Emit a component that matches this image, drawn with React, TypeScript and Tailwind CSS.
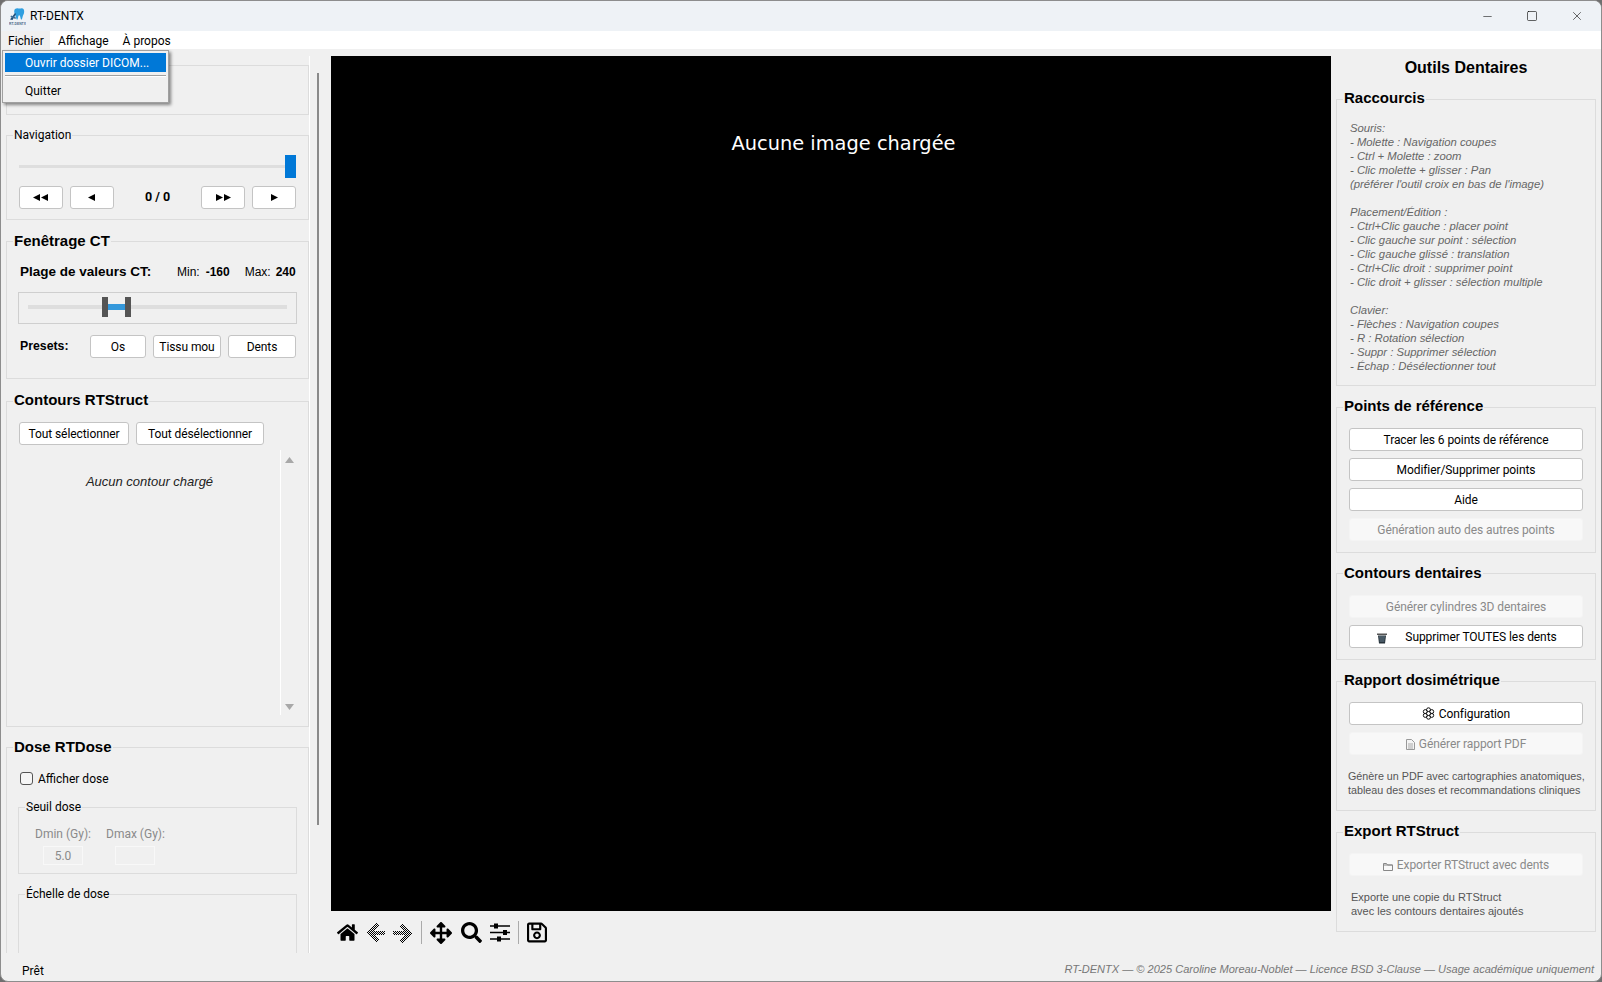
import { ReactNode } from "react";
import { FaHome, FaArrowsAlt, FaSearch, FaRegSave } from "react-icons/fa";
import { Minus, Square, X } from "lucide-react";

const ui = "font-['Roboto',sans-serif]";
const arial = "font-['Liberation_Sans',Arial,sans-serif]";

const shortcuts = `Souris:
- Molette : Navigation coupes
- Ctrl + Molette : zoom
- Clic molette + glisser : Pan
(préférer l'outil croix en bas de l'image)

Placement/Édition :
- Ctrl+Clic gauche : placer point
- Clic gauche sur point : sélection
- Clic gauche glissé : translation
- Ctrl+Clic droit : supprimer point
- Clic droit + glisser : sélection multiple

Clavier:
- Flèches : Navigation coupes
- R : Rotation sélection
- Suppr : Supprimer sélection
- Échap : Désélectionner tout`;

const Btn = ({
  children,
  className = "",
  disabled = false,
}: {
  children: ReactNode;
  className?: string;
  disabled?: boolean;
}) => (
  <div
    className={`flex h-[23px] items-center justify-center rounded-[3px] border text-[12px] tracking-[-0.08px] ${
      disabled
        ? "border-[#f4f4f4] bg-[#f8f8f8] text-[#8a8a8a]"
        : "border-[#c4c4c4] bg-white text-black"
    } ${className}`}
  >
    {children}
  </div>
);

// group box whose title sits on the top border
const Group = ({
  title,
  bold = false,
  low = false,
  className = "",
  children,
}: {
  title?: string;
  bold?: boolean;
  low?: boolean;
  className?: string;
  children?: ReactNode;
}) => (
  <div className={`border border-[#dcdcdc] ${className}`}>
    {title && (
      <div
        className={`ml-[6px] h-0 w-fit leading-none ${
          bold
            ? `${arial} ${low ? "-mt-[9px] mb-[9px]" : "-mt-[10px] mb-[10px]"} text-[15px] font-bold`
            : "-mt-[7px] mb-[7px] text-[12px]"
        }`}
      >
        <span className="block bg-[#f0f0f0] px-px">{title}</span>
      </div>
    )}
    {children}
  </div>
);

const Tri = ({ dir }: { dir: "left" | "right" }) => (
  <svg width="7" height="7" viewBox="0 0 7 7" className="block">
    <path d={dir === "left" ? "M7 0v7L0 3.5z" : "M0 0v7l7-3.5z"} fill="#000" />
  </svg>
);

const Logo = () => (
  <svg width="17" height="19" viewBox="0 0 17 19" className="block">
    <path
      d="M6 2c2-1.500 3.500-.5 4.500-.5s3-1 4 .5 1 4.500-.5 6.500l-1 3.500c-.3.8-1 .8-1.200 0L11 9c-.3-1-1.300-1-1.600 0l-.7 3c-.3.8-1 .8-1.200 0L6.500 9C5.500 6.500 4.500 3.500 6 2z"
      fill="#2f9fe0"
    />
    <path d="M1 12.500L6 6l1 1-3.500 6z" fill="#1d4f7c" />
    <path d="M2 8.500l5 2-.5 1.500-5-2z" fill="#3c6c96" />
    <text x="0" y="18" fontSize="3.400" fontWeight="700" fill="#4a6a86" fontFamily="Liberation Sans, sans-serif">
      RT-DENTX
    </text>
  </svg>
);

// disabled toolbar arrows are checkered pixel by pixel
const Dither = ({ flip = false }: { flip?: boolean }) => (
  <svg
    width="19"
    height="20"
    viewBox="0 0 19 20"
    shapeRendering="crispEdges"
    className={`block ${flip ? "-scale-x-100" : ""}`}
  >
    <defs>
      <pattern id={flip ? "ditherB" : "ditherA"} width="2" height="2" patternUnits="userSpaceOnUse">
        <rect width="1" height="1" fill="#000" />
        <rect x="1" y="1" width="1" height="1" fill="#000" />
      </pattern>
    </defs>
    <path
      fill={flip ? "url(#ditherB)" : "url(#ditherA)"}
      d="M10 0l3 3-5 5h11v4H8l5 5-3 3L0 10z"
    />
  </svg>
);

const Sliders = () => (
  <svg width="20" height="19" viewBox="0 0 20 19" className="ml-[8px] block">
    <path d="M0 3h20M0 9.500h20M0 16h20" stroke="#000" strokeWidth="1.300" />
    <path d="M4 0.500h4v5H4zM13 7h4v5h-4zM7 13.500h4v5H7z" fill="#000" />
  </svg>
);

const Gear = () => (
  <svg width="13" height="13" viewBox="0 0 13 13" fill="none" stroke="#111" className="block">
    <circle cx="6.500" cy="2.800" r="2" />
    <circle cx="6.500" cy="10.200" r="2" />
    <circle cx="3.300" cy="4.600" r="2" />
    <circle cx="9.700" cy="4.600" r="2" />
    <circle cx="3.300" cy="8.400" r="2" />
    <circle cx="9.700" cy="8.400" r="2" />
    <circle cx="6.500" cy="6.500" r="2" fill="#fff" />
  </svg>
);

const Trash = () => (
  <svg width="10" height="11" viewBox="0 0 10 11" className="absolute left-[27px] top-[7px]">
    <path d="M0 .5h10v1.500H0z" fill="#555" />
    <path d="M1 2.500h8l-1 8H2z" fill="#26323a" />
    <path d="M2 4h6M2.300 6h5.400M2.600 8h4.800" stroke="#8aa4b8" strokeWidth=".7" />
  </svg>
);

const LeftPanel = () => (
  <div className="relative h-full w-[318px] shrink-0 overflow-hidden pl-[5px] pt-[16px]">
    <div className="w-[303px]">
      <Group className="h-[50px]" />

      <Group title="Navigation" className="mt-[20px] h-[85px]">
        <div className="px-[12px] pt-[19px]">
          <div className="relative flex h-[23px] items-center">
            <div className="h-[3px] flex-1 bg-[#dedede]" />
            <div className="absolute right-0 top-0 h-[23px] w-[11px] bg-[#0078d7]" />
          </div>
          <div className="mt-[8px] flex h-[23px] items-center">
            <Btn className="w-[44px] gap-px"><Tri dir="left" /><Tri dir="left" /></Btn>
            <Btn className="ml-[7px] w-[44px]"><Tri dir="left" /></Btn>
            <div className="w-[88px] text-center text-[12.500px] font-bold">0 / 0</div>
            <Btn className="w-[44px] gap-px"><Tri dir="right" /><Tri dir="right" /></Btn>
            <Btn className="ml-[7px] w-[44px]"><Tri dir="right" /></Btn>
          </div>
        </div>
      </Group>

      <Group title="Fenêtrage CT" bold low className="mt-[21px] h-[138px]">
        <div className="px-[12px] pt-[20px]">
          <div className={`${arial} flex h-[20px] items-center text-[12px]`}>
            <span className="ml-[1px] w-[157px] text-[13.500px] font-bold">Plage de valeurs CT:</span>
            <span>Min:</span>
            <span className="ml-[6px] w-[39px] font-bold">-160</span>
            <span>Max:</span>
            <span className="ml-[5px] font-bold">240</span>
          </div>
          <div className="relative -mx-px mt-[10px] h-[32px] border border-[#cfcfcf]">
            <div className="mx-[9px] mt-[12px] h-[4px] bg-[#dedede]" />
            <div className="absolute left-[83px] top-[4px] h-[20px] w-[6px] bg-[#555]" />
            <div className="absolute left-[89px] top-[11px] h-[6px] w-[17px] bg-[#3498db]" />
            <div className="absolute left-[106px] top-[4px] h-[20px] w-[6px] bg-[#555]" />
          </div>
          <div className="mt-[11px] flex h-[23px] items-center">
            <span className={`${arial} ml-[1px] w-[70px] text-[12.300px] font-bold`}>Presets:</span>
            <Btn className="w-[56px]">Os</Btn>
            <Btn className="ml-[7px] w-[68px]">Tissu mou</Btn>
            <Btn className="ml-[7px] w-[68px]">Dents</Btn>
          </div>
        </div>
      </Group>

      <Group title="Contours RTStruct" bold className="mt-[22px] h-[326px]">
        <div className="flex gap-[7px] px-[12px] pt-[20px]">
          <Btn className="w-[110px]">Tout sélectionner</Btn>
          <Btn className="w-[128px]">Tout désélectionner</Btn>
        </div>
        <div className="mt-[5px] flex h-[265px]">
          <div className={`${arial} w-[273px] pl-[12px] pt-[22px] text-center text-[13px] italic text-[#222]`}>
            Aucun contour chargé
          </div>
          <div className="flex w-[18px] flex-col items-center justify-between border-l border-white pb-[5px] pt-[7px]">
            <svg width="9" height="6" className="block"><path d="M4.500 0L9 6H0z" fill="#a8a8a8" /></svg>
            <svg width="9" height="6" className="block"><path d="M0 0h9L4.500 6z" fill="#a8a8a8" /></svg>
          </div>
        </div>
      </Group>

      <Group title="Dose RTDose" bold low className="mt-[20px] h-[400px]">
        <div className="flex h-[37px] items-center px-[13px] pt-[24px]">
          <div className="h-[13px] w-[13px] rounded-[3px] border border-[#555] bg-[#f6f6f6]" />
          <span className="ml-[5px] text-[12px]">Afficher dose</span>
        </div>
        <div className="px-[11px]">
          <Group title="Seuil dose" className="mt-[22px] h-[67px]">
            <div className="flex pl-[16px] pt-[17px] text-[12px] leading-[18px] text-[#8a8a8a]">
              <span className="w-[71px]">Dmin (Gy):</span>
              <span>Dmax (Gy):</span>
            </div>
            <div className="mt-[3px] flex pl-[24px]">
              <div className="flex h-[19px] w-[40px] items-center justify-center border border-[#f8f8f8] text-[12px] text-[#8a8a8a]">5.0</div>
              <div className="ml-[32px] h-[19px] w-[40px] border border-[#f8f8f8]" />
            </div>
          </Group>
          <Group title="Échelle de dose" className="mt-[20px] h-[120px]" />
        </div>
      </Group>
    </div>
    <div className="absolute bottom-0 left-[308px] top-[7px] w-px bg-white" />
    <div className="absolute left-[316px] top-[24px] h-[752px] w-[2px] bg-[#8a8a8a]" />
  </div>
);

const RightPanel = () => (
  <div className="ml-[5px] h-full w-[260px] shrink-0">
    <div className={`${arial} flex h-[50px] items-center justify-center pb-[12px] text-[16px] font-bold`}>
      Outils Dentaires
    </div>
    <Group title="Raccourcis" bold className="h-[287px]">
      <pre className={`${arial} pl-[13px] pt-[21px] text-[11.300px] italic leading-[14px] text-[#666]`}>
        {shortcuts}
      </pre>
    </Group>
    <Group title="Points de référence" bold className="mt-[21px] h-[146px]">
      <div className="flex flex-col gap-[7px] px-[12px] pt-[20px]">
        <Btn>Tracer les 6 points de référence</Btn>
        <Btn>Modifier/Supprimer points</Btn>
        <Btn>Aide</Btn>
        <Btn disabled>Génération auto des autres points</Btn>
      </div>
    </Group>
    <Group title="Contours dentaires" bold low className="mt-[20px] h-[87px]">
      <div className="flex flex-col gap-[7px] px-[12px] pt-[21px]">
        <Btn disabled>Générer cylindres 3D dentaires</Btn>
        <Btn className="relative">
          <Trash />
          <span className="ml-[30px]">Supprimer TOUTES les dents</span>
        </Btn>
      </div>
    </Group>
    <Group title="Rapport dosimétrique" bold className="mt-[21px] h-[130px]">
      <div className="flex flex-col gap-[7px] px-[12px] pt-[20px]">
        <Btn className="gap-[4px]">
          <Gear />
          Configuration
        </Btn>
        <Btn disabled className="gap-[4px]">
          <svg width="9" height="11" viewBox="0 0 9 11" className="mt-[2px]">
            <path d="M.5.500h5l3 3v7h-8z" fill="#f4f4f4" stroke="#999" />
            <path d="M2 5h5M2 7h5M2 9h5" stroke="#aaa" />
          </svg>
          Générer rapport PDF
        </Btn>
      </div>
      <p className={`${arial} pl-[11px] pt-[14px] text-[10.750px] leading-[14px] text-[#555]`}>
        Génère un PDF avec cartographies anatomiques,
        <br />
        tableau des doses et recommandations cliniques
      </p>
    </Group>
    <Group title="Export RTStruct" bold className="mt-[21px] h-[100px]">
      <div className="px-[12px] pt-[20px]">
        <Btn disabled className="gap-[4px]">
          <svg width="10" height="9" viewBox="0 0 10 9" className="mt-[3px]">
            <path d="M.5 8.500v-7h3l1 1.500h5v5.500zM.5 3h9" fill="none" stroke="#888" />
          </svg>
          Exporter RTStruct avec dents
        </Btn>
      </div>
      <p className={`${arial} pl-[14px] pt-[14px] text-[11px] leading-[14px] text-[#555]`}>
        Exporte une copie du RTStruct
        <br />
        avec les contours dentaires ajoutés
      </p>
    </Group>
  </div>
);

const Toolbar = () => (
  <div className="flex h-[40px] items-center pl-[6px] pt-[3px]">
    <FaHome size={21} className="mr-[8px]" />
    <Dither />
    <div className="w-[8px]" />
    <Dither flip />
    <div className="ml-[9px] mr-[8px] h-[23px] w-px bg-[#aaa]" />
    <FaArrowsAlt size={22} />
    <FaSearch size={21} className="ml-[9px]" />
    <Sliders />
    <div className="ml-[8px] mr-[8px] h-[23px] w-px bg-[#aaa]" />
    <FaRegSave className="h-[23px] w-[20px]" />
  </div>
);

export default function App() {
  return (
    <div className="h-[982px] w-[1602px] bg-[#6f6f6f]">
      <div className={`${ui} relative flex h-full w-full flex-col overflow-hidden rounded-[8px] border border-[#8d8d8d] bg-[#f0f0f0] text-black`}>
        {/* title bar */}
        <div className="flex h-[30px] shrink-0 items-center bg-[#eef2f6] pl-[8px]">
          <Logo />
          <span className="ml-[4px] text-[12px]">RT-DENTX</span>
          <div className="ml-auto flex items-center">
            <Minus size={13} strokeWidth={1} />
            <Square size={12} strokeWidth={1.200} className="ml-[32px]" />
            <X size={14} strokeWidth={1} className="ml-[32px] mr-[17px]" />
          </div>
        </div>

        {/* menu bar */}
        <div className="flex h-[18px] shrink-0 items-center bg-white text-[12px]">
          <span className="flex h-full w-[49px] items-center bg-[#f0f0f0] pl-[7px] pt-[2px]">Fichier</span>
          <span className="ml-[8px] pt-[2px]">Affichage</span>
          <span className="ml-[14px] pt-[2px]">À propos</span>
        </div>

        <div className="flex min-h-0 flex-1">
          <LeftPanel />
          <div className="ml-[12px] flex w-[1000px] shrink-0 flex-col pt-[7px]">
            <div className="flex h-[855px] justify-center bg-black pt-[75px] font-['DejaVu_Sans',sans-serif] text-[19.400px] leading-[26px] text-white">
              <span className="ml-[25px]">Aucune image chargée</span>
            </div>
            <Toolbar />
          </div>
          <RightPanel />
        </div>

        {/* status bar */}
        <div className="flex h-[28px] shrink-0 items-center justify-between pl-[21px] pr-[7px] pt-[5px]">
          <span className="mt-[2px] text-[12px]">Prêt</span>
          <span className={`${arial} text-[11.050px] italic text-[#777]`}>
            RT-DENTX — © 2025 Caroline Moreau-Noblet — Licence BSD 3-Clause — Usage académique uniquement
          </span>
        </div>

        {/* open menu */}
        <div className="absolute left-[1px] top-[49px] h-[53px] w-[167px] border border-[#a0a0a0] bg-[#f0f0f0] p-px text-[12px] shadow-[2px_2px_3px_rgba(0,0,0,0.45)]">
          <div className="mx-px mt-px flex h-[19px] items-center bg-[#0078d7] pl-[20px] text-white">
            Ouvrir dossier DICOM...
          </div>
          <div className="mx-px mt-[3px] h-[2px] bg-[linear-gradient(#a0a0a0_50%,#fff_50%)]" />
          <div className="mt-[4px] flex h-[19px] items-center pl-[21px]">Quitter</div>
        </div>
      </div>
    </div>
  );
}
